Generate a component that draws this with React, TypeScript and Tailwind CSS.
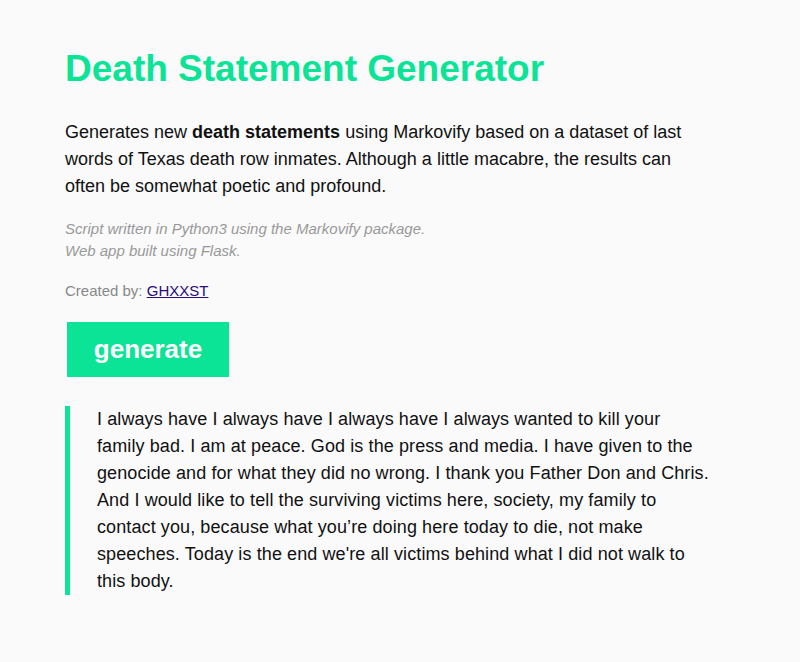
export default function App() {
  return (
    <div className="min-h-screen bg-[#fafafa] font-['Liberation_Sans',Arial,sans-serif] text-[#111]">
      <div className="pl-[65px] pr-[30px] pt-[48px] pb-12">
        <h1 className="text-[37px] font-bold leading-[42px] text-[#0be396]">Death Statement Generator</h1>

        <p className="mt-[29px] text-[18px] leading-[27px]">
          Generates new <strong>death statements</strong> using Markovify based on a dataset of last
          <br />
          words of Texas death row inmates. Although a little macabre, the results can
          <br />
          often be somewhat poetic and profound.
        </p>

        <div className="mt-[18px] text-[15px] leading-[22px] italic text-[#999]">
          <p>Script written in Python3 using the Markovify package.</p>
          <p>Web app built using Flask.</p>
        </div>

        <p className="mt-[18px] text-[15px] leading-[22px] text-[#888]">
          Created by: <a href="#" className="text-[#2a0a7a] underline">GHXXST</a>
        </p>

        <button className="mt-[20px] ml-[2px] h-[55px] w-[162px] bg-[#0be396] text-[26px] font-bold text-white">
          generate
        </button>

        <blockquote className="mt-[29px] border-l-[5px] border-[#0be396] pl-[27px] text-[18px] leading-[27px] tracking-[0.1px]">
          I always have I always have I always have I always wanted to kill your
          <br />
          family bad. I am at peace. God is the press and media. I have given to the
          <br />
          genocide and for what they did no wrong. I thank you Father Don and Chris.
          <br />
          And I would like to tell the surviving victims here, society, my family to
          <br />
          contact you, because what you’re doing here today to die, not make
          <br />
          speeches. Today is the end we're all victims behind what I did not walk to
          <br />
          this body.
        </blockquote>
      </div>
    </div>
  )
}
